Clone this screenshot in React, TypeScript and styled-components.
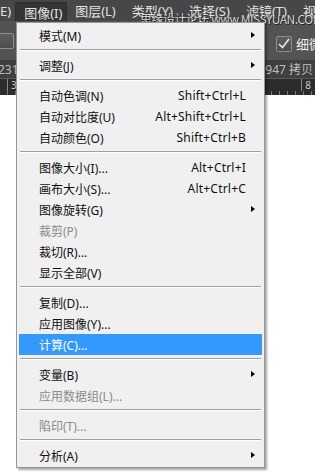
import React from "react";
import styled, { createGlobalStyle, css } from "styled-components";

const Global = createGlobalStyle`
  html, body { margin: 0; padding: 0; background: #ffffff; }
  body { width: 315px; height: 473px; overflow: hidden; font-family: "Noto Sans", "Noto Sans CJK SC", sans-serif; }
`;

const Page = styled.div`
  position: relative;
  width: 315px;
  height: 473px;
  background: #ffffff;
  overflow: hidden;
`;

const Chrome = styled.div`
  display: flex;
  flex-direction: column;
`;

const MenuBar = styled.div`
  height: 21px;
  background: #474747;
  display: flex;
  align-items: center;
  font-size: 13px;
  color: #e2e2e2;
  white-space: nowrap;
`;

const BarItem = styled.div<{ $open?: boolean; $w?: number; $first?: boolean }>`
  height: 19px;
  display: flex;
  align-items: center;
  padding: 0 8px;
  box-sizing: border-box;
  flex: none;
  ${(p) => p.$first && css`padding: 0 4px 0 0;`}
  ${(p) => p.$w && css`width: ${p.$w}px;`}
  ${(p) =>
    p.$open &&
    css`
      background: #353535;
      border: 1px solid #2c2c2c;
      border-bottom: none;
      border-radius: 2px 2px 0 0;
      margin-top: 2px;
      height: 19px;
    `}
`;

const OptionsBar = styled.div`
  height: 39px;
  background: #535353;
  display: flex;
  align-items: flex-end;
  justify-content: space-between;
  padding-bottom: 9px;
  box-sizing: border-box;
`;

const Check = styled.div<{ $cut?: boolean }>`
  width: 14px;
  height: 14px;
  border: 1px solid #8e8e8e;
  border-radius: 2px;
  background: linear-gradient(#5e5e5e, #4c4c4c);
  display: flex;
  align-items: center;
  justify-content: center;
  ${(p) => p.$cut && css`margin-left: -2px; margin-bottom: 2px;`}
`;

const CheckGroup = styled.div`
  display: flex;
  align-items: center;
  gap: 4px;
  color: #f0f0f0;
  font-size: 13px;
  margin-right: -7px;
  margin-bottom: -2px;
`;

const TabBar = styled.div`
  height: 18px;
  background: #3f3f3f;
  display: flex;
  align-items: center;
  justify-content: space-between;
  font-size: 12px;
  color: #bdbdbd;
  white-space: nowrap;
  border-bottom: 1px solid #5a5a5a;
`;

const TabText = styled.span<{ $right?: boolean }>`
  ${(p) => (p.$right ? css`margin-right: 2px;` : css`margin-left: -2px;`)}
`;

const Ruler = styled.div`
  height: 16px;
  display: flex;
  justify-content: space-between;
  font-size: 10px;
  color: #c8c8c8;
  background-image: repeating-linear-gradient(
    to right,
    transparent 0 7px,
    #777 7px 8px
  );
  background-size: 100% 4px;
  background-position: 0 100%;
  background-repeat: no-repeat;
  background-color: #2c2c2c;
`;

const RulerNum = styled.span<{ $right?: boolean }>`
  border-left: 1px solid #8a8a8a;
  padding-left: 3px;
  height: 12px;
  line-height: 12px;
  ${(p) => (p.$right ? css`margin-right: 4px;` : css`margin-left: 7px;`)}
`;

const Watermark = styled.div`
  position: absolute;
  left: 140px;
  top: 10px;
  font-size: 12px;
  color: #f4f4f4;
  letter-spacing: -0.5px;
  white-space: nowrap;
  text-shadow: 0 0 1px #000, 1px 1px 0 #222;
  opacity: 0.85;
  font-family: "Noto Sans CJK SC", sans-serif;
`;

const Menu = styled.div`
  position: absolute;
  left: 16px;
  top: 22px;
  width: 249px;
  box-sizing: border-box;
  background: #f0f0f0;
  border: 1px solid #979797;
  box-shadow: 2px 2px 2px rgba(0, 0, 0, 0.35);
  padding: 2px 1px 1px 1px;
  display: flex;
  flex-direction: column;
  font-size: 12px;
`;

const Item = styled.div<{ $active?: boolean; $disabled?: boolean }>`
  height: 21px;
  margin: 0 1px;
  display: flex;
  align-items: center;
  padding: 0 16px 0 20px;
  color: ${(p) => (p.$disabled ? "#8b8b8b" : "#101010")};
  white-space: nowrap;
  position: relative;
  ${(p) =>
    p.$active &&
    css`
      background: #3399ff;
      color: #ffffff;
    `}
`;

const Label = styled.span`
  flex: 1;
`;

const Shortcut = styled.span`
  letter-spacing: 0.2px;
`;

const Arrow = styled.span`
  position: absolute;
  right: 7px;
  top: 7px;
  width: 0;
  height: 0;
  border-top: 3.5px solid transparent;
  border-bottom: 3.5px solid transparent;
  border-left: 4px solid #000;
`;

const Separator = styled.div`
  height: 9px;
  margin: 0 2px;
  box-sizing: border-box;
  padding-top: 3px;
  &::before {
    content: "";
    display: block;
    height: 1px;
    background: #a0a0a0;
    border-bottom: 1px solid #ffffff;
  }
`;

type Entry =
  | { sep: true }
  | { label: string; sc?: string; sub?: boolean; disabled?: boolean; active?: boolean };

const entries: Entry[] = [
  { label: "模式(M)", sub: true },
  { sep: true },
  { label: "调整(J)", sub: true },
  { sep: true },
  { label: "自动色调(N)", sc: "Shift+Ctrl+L" },
  { label: "自动对比度(U)", sc: "Alt+Shift+Ctrl+L" },
  { label: "自动颜色(O)", sc: "Shift+Ctrl+B" },
  { sep: true },
  { label: "图像大小(I)...", sc: "Alt+Ctrl+I" },
  { label: "画布大小(S)...", sc: "Alt+Ctrl+C" },
  { label: "图像旋转(G)", sub: true },
  { label: "裁剪(P)", disabled: true },
  { label: "裁切(R)..." },
  { label: "显示全部(V)" },
  { sep: true },
  { label: "复制(D)..." },
  { label: "应用图像(Y)..." },
  { label: "计算(C)...", active: true },
  { sep: true },
  { label: "变量(B)", sub: true },
  { label: "应用数据组(L)...", disabled: true },
  { sep: true },
  { label: "陷印(T)...", disabled: true },
  { sep: true },
  { label: "分析(A)", sub: true },
];

const CheckMark = () => (
  <svg width="12" height="11" viewBox="0 0 12 11">
    <path d="M1 6 L4.5 9.5 L11 1" fill="none" stroke="#e8e8e8" strokeWidth="1.6" />
  </svg>
);

export default function App() {
  return (
    <Page>
      <Global />
      <Chrome>
        <MenuBar>
          <BarItem $first>E)</BarItem>
          <BarItem $open $w={52}>图像(I)</BarItem>
          <BarItem>图层(L)</BarItem>
          <BarItem>类型(Y)</BarItem>
          <BarItem>选择(S)</BarItem>
          <BarItem>滤镜(T)</BarItem>
          <BarItem>视图</BarItem>
        </MenuBar>
        <OptionsBar>
          <Check $cut />
          <CheckGroup>
            <Check>
              <CheckMark />
            </Check>
            <span>细微</span>
          </CheckGroup>
        </OptionsBar>
        <TabBar>
          <TabText>231</TabText>
          <TabText $right>9947 拷贝</TabText>
        </TabBar>
        <Ruler>
          <RulerNum>3</RulerNum>
          <RulerNum $right>8</RulerNum>
        </Ruler>
      </Chrome>
      <Watermark>思缘设计论坛 www.MISSYUAN.COM</Watermark>
      <Menu>
        {entries.map((e, i) =>
          "sep" in e ? (
            <Separator key={i} />
          ) : (
            <Item key={i} $active={e.active} $disabled={e.disabled}>
              <Label>{e.label}</Label>
              {e.sc && <Shortcut>{e.sc}</Shortcut>}
              {e.sub && <Arrow />}
            </Item>
          )
        )}
      </Menu>
    </Page>
  );
}
